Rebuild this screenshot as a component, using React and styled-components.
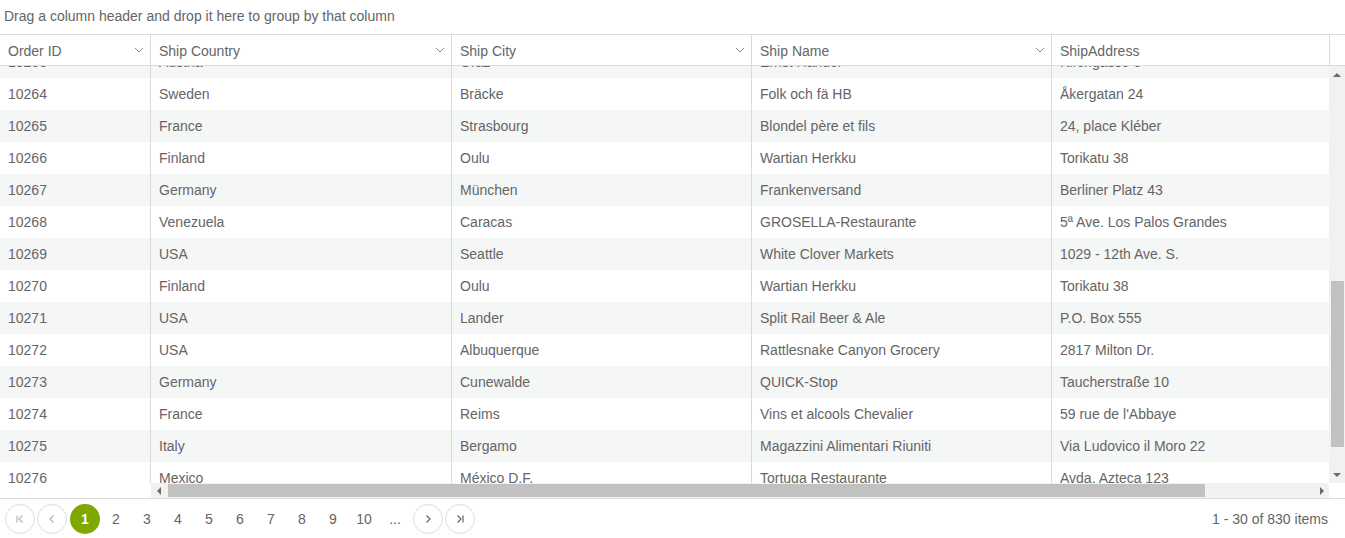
import React from "react";
import styled, { createGlobalStyle } from "styled-components";

const GlobalStyle = createGlobalStyle`
  html, body { margin: 0; padding: 0; background: #fff; }
  body { font-family: "Liberation Sans", Arial, sans-serif; font-size: 14px; color: #656565; }
  * { box-sizing: border-box; }
`;

const orders = [
  ["10263", "Austria", "Graz", "Ernst Handel", "Kirchgasse 6"],
  ["10264", "Sweden", "Bräcke", "Folk och fä HB", "Åkergatan 24"],
  ["10265", "France", "Strasbourg", "Blondel père et fils", "24, place Kléber"],
  ["10266", "Finland", "Oulu", "Wartian Herkku", "Torikatu 38"],
  ["10267", "Germany", "München", "Frankenversand", "Berliner Platz 43"],
  ["10268", "Venezuela", "Caracas", "GROSELLA-Restaurante", "5ª Ave. Los Palos Grandes"],
  ["10269", "USA", "Seattle", "White Clover Markets", "1029 - 12th Ave. S."],
  ["10270", "Finland", "Oulu", "Wartian Herkku", "Torikatu 38"],
  ["10271", "USA", "Lander", "Split Rail Beer & Ale", "P.O. Box 555"],
  ["10272", "USA", "Albuquerque", "Rattlesnake Canyon Grocery", "2817 Milton Dr."],
  ["10273", "Germany", "Cunewalde", "QUICK-Stop", "Taucherstraße 10"],
  ["10274", "France", "Reims", "Vins et alcools Chevalier", "59 rue de l'Abbaye"],
  ["10275", "Italy", "Bergamo", "Magazzini Alimentari Riuniti", "Via Ludovico il Moro 22"],
  ["10276", "Mexico", "México D.F.", "Tortuga Restaurante", "Avda. Azteca 123"],
];

const scrollCols = [
  { title: "Ship Country", width: 301, menu: true },
  { title: "Ship City", width: 300, menu: true },
  { title: "Ship Name", width: 300, menu: true },
  { title: "ShipAddress", width: 403, menu: true },
];

const pages = ["1", "2", "3", "4", "5", "6", "7", "8", "9", "10", "..."];

const Chevron = () => (
  <svg width="10" height="6" viewBox="0 0 10 6">
    <polyline points="1,1 5,5 9,1" fill="none" stroke="#8a8a8a" strokeWidth="1" />
  </svg>
);

const Arrow = ({ dir }) => {
  const pts = {
    up: "0,5 4,1 8,5",
    down: "0,1 4,5 8,1",
    left: "5,0 1,4 5,8",
    right: "1,0 5,4 1,8",
  }[dir];
  const vertical = dir === "up" || dir === "down";
  return (
    <svg width={vertical ? 8 : 6} height={vertical ? 6 : 8} viewBox={vertical ? "0 0 8 6" : "0 0 6 8"}>
      <polygon points={pts} fill="#6b6d63" />
    </svg>
  );
};

const PagerIcon = ({ kind, color }) => (
  <svg width="12" height="12" viewBox="0 0 12 12" fill="none" stroke={color} strokeWidth="1.2">
    {kind === "first" && (<><line x1="3" y1="2.5" x2="3" y2="9.5" /><polyline points="8.5,2.5 5,6 8.5,9.5" /></>)}
    {kind === "prev" && <polyline points="7.5,2.5 4,6 7.5,9.5" />}
    {kind === "next" && <polyline points="4.5,2.5 8,6 4.5,9.5" />}
    {kind === "last" && (<><polyline points="3.5,2.5 7,6 3.5,9.5" /><line x1="9" y1="2.5" x2="9" y2="9.5" /></>)}
  </svg>
);

export default function App() {
  return (
    <>
      <GlobalStyle />
      <Grid>
        <GroupPanel>Drag a column header and drop it here to group by that column</GroupPanel>

        <HeaderRow>
          <HeaderCell $width={151}>
            Order ID
            <Chevron />
          </HeaderCell>
          <HeaderScroll>
            {scrollCols.map((c) => (
              <HeaderCell key={c.title} $width={c.width}>
                {c.title}
                {c.menu && <Chevron />}
              </HeaderCell>
            ))}
          </HeaderScroll>
          <HeaderGutter />
        </HeaderRow>

        <Body>
          <Viewport>
            <Rows>
              {orders.map((o, i) => (
                <Row key={o[0]} $alt={i % 2 === 0}>
                  <Cell $width={151}>{o[0]}</Cell>
                </Row>
              ))}
            </Rows>
          </Viewport>

          <Viewport>
            <Rows>
              {orders.map((o, i) => (
                <Row key={o[0]} $alt={i % 2 === 0}>
                  {scrollCols.map((c, j) => (
                    <Cell key={c.title} $width={c.width}>{o[j + 1]}</Cell>
                  ))}
                </Row>
              ))}
            </Rows>
          </Viewport>

          <VScroll>
            <ArrowBtn><Arrow dir="up" /></ArrowBtn>
            <VTrack>
              <VThumb />
            </VTrack>
            <ArrowBtn><Arrow dir="down" /></ArrowBtn>
          </VScroll>

          <Blank />

          <HScroll>
            <ArrowBtnH><Arrow dir="left" /></ArrowBtnH>
            <HTrack>
              <HThumb />
            </HTrack>
            <ArrowBtnH><Arrow dir="right" /></ArrowBtnH>
          </HScroll>

          <Blank />
        </Body>

        <Pager>
          <PagerNav>
            <NavButton><PagerIcon kind="first" color="#b3b3b3" /></NavButton>
            <NavButton><PagerIcon kind="prev" color="#b3b3b3" /></NavButton>
          </PagerNav>
          <PageList>
            {pages.map((p) => (
              <PageItem key={p} $current={p === "1"}>{p}</PageItem>
            ))}
          </PageList>
          <PagerNav>
            <NavButton><PagerIcon kind="next" color="#656565" /></NavButton>
            <NavButton><PagerIcon kind="last" color="#656565" /></NavButton>
          </PagerNav>
          <PagerInfo>1 - 30 of 830 items</PagerInfo>
        </Pager>
      </Grid>
    </>
  );
}

const Grid = styled.div`
  width: 1345px; height: 538px; display: flex; flex-direction: column;
  background: #fff; overflow: hidden;
`;

const GroupPanel = styled.div`
  height: 35px; padding: 0 4px; display: flex; align-items: center;
  border-bottom: 1px solid #dbdbdb; padding-bottom: 3px;
`;

const HeaderRow = styled.div`
  height: 31px; display: flex; border-bottom: 1px solid #dbdbdb; flex: none;
`;

const HeaderScroll = styled.div`
  flex: 1; display: flex; overflow: hidden;
`;

const HeaderCell = styled.div`
  flex: none; width: ${(p) => p.$width}px; height: 100%;
  display: flex; align-items: center; justify-content: space-between;
  padding: 1px 6px 0 8px; border-right: 1px solid #dbdbdb; white-space: nowrap;
  svg { margin-top: -1px; }
`;

const HeaderGutter = styled.div`
  width: 16px; flex: none; border-left: 1px solid #dbdbdb;
`;

const Body = styled.div`
  display: grid; grid-template-columns: 151px 1fr 16px; grid-template-rows: 417px 15px;
  flex: none;
`;

const Viewport = styled.div`
  overflow: hidden;
`;

const Rows = styled.div`
  margin-top: -20px;
`;

const Row = styled.div`
  display: flex; height: 32px; background: ${(p) => (p.$alt ? "#f5f6f6" : "#fff")};
`;

const Cell = styled.div`
  flex: none; width: ${(p) => p.$width}px; height: 100%; display: flex; align-items: center;
  padding-left: 8px; border-right: 1px solid #dbdbdb; white-space: nowrap; overflow: hidden;
`;

const VScroll = styled.div`
  background: #f1f1f1; display: flex; flex-direction: column; align-items: stretch;
`;

const ArrowBtn = styled.div`
  height: 17px; display: flex; align-items: center; justify-content: center; flex: none;
`;

const VTrack = styled.div`
  flex: 1; padding: 0 1px 0 2px; display: flex; flex-direction: column;
`;

const VThumb = styled.div`
  margin-top: 198px; height: 166px; background: #c1c1c1;
`;

const Blank = styled.div`
  background: #fff;
`;

const HScroll = styled.div`
  background: #f1f1f1; display: flex;
`;

const ArrowBtnH = styled.div`
  width: 15px; display: flex; align-items: center; justify-content: center; flex: none;
`;

const HTrack = styled.div`
  flex: 1; padding: 1px 0; display: flex;
`;

const HThumb = styled.div`
  margin-left: 2px; width: 1037px; background: #c1c1c1;
`;

const Pager = styled.div`
  flex: 1; border-top: 1px solid #dbdbdb; display: flex; align-items: center; padding: 0 17px 0 5px;
`;

const PagerNav = styled.div`
  display: flex; gap: 2px;
`;

const NavButton = styled.div`
  width: 30px; height: 30px; border-radius: 50%; border: 1px solid #dcdcdc;
  display: flex; align-items: center; justify-content: center;
`;

const PageList = styled.div`
  display: flex; gap: 1px; margin: 0 3px;
`;

const PageItem = styled.div`
  width: 30px; height: 30px; border-radius: 50%; display: flex; align-items: center; justify-content: center;
  background: ${(p) => (p.$current ? "#7ea700" : "transparent")};
  color: ${(p) => (p.$current ? "#fff" : "#656565")};
  font-weight: ${(p) => (p.$current ? 700 : 400)};
`;

const PagerInfo = styled.div`
  margin-left: auto;
`;
